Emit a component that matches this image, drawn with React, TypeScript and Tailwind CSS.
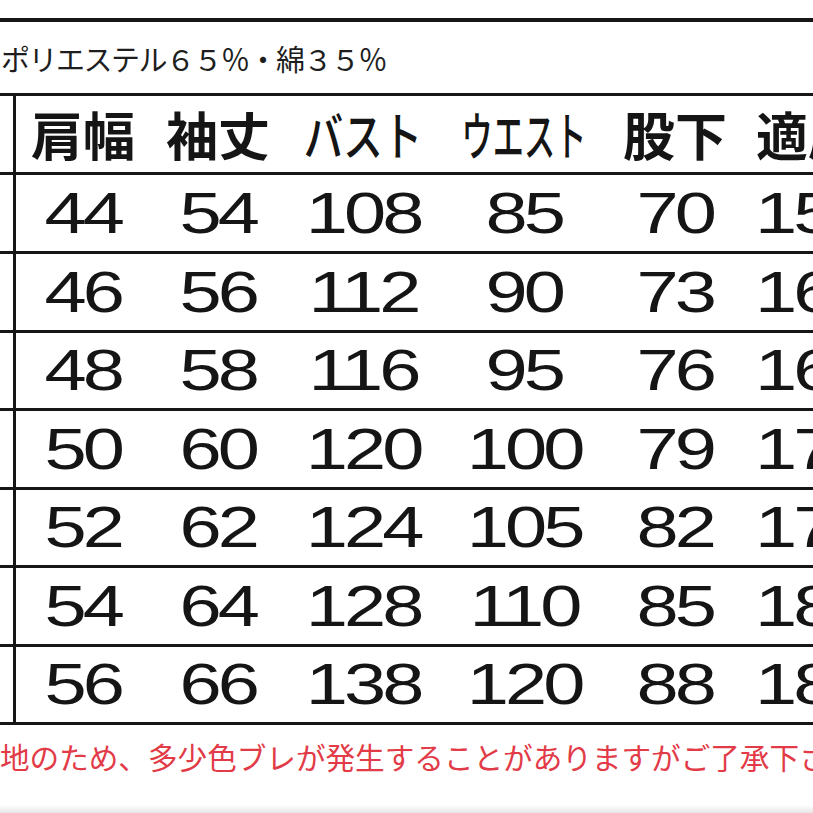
import React from "react";

const rows: string[][] = [
  ["44", "54", "108", "85", "70", "157"],
  ["46", "56", "112", "90", "73", "162"],
  ["48", "58", "116", "95", "76", "167"],
  ["50", "60", "120", "100", "79", "172"],
  ["52", "62", "124", "105", "82", "177"],
  ["54", "64", "128", "110", "85", "182"],
  ["56", "66", "138", "120", "88", "187"],
];

const rowHeights = ["h-[79px]", "h-[79px]", "h-[78px]", "h-[79px]", "h-[78px]", "h-[79px]", "h-[78px]"];

const colW = ["w-[134px]", "w-[136px]", "w-[154px]", "w-[168px]", "w-[134px]"];

function Num({ v }: { v: string }) {
  return (
    <span className="inline-block scale-x-[1.33] tracking-[-3px] text-[57px] leading-none text-[#151515] [font-family:'Liberation_Sans',Arial,sans-serif]">
      {v}
    </span>
  );
}

export default function App() {
  const jp = "[font-family:'Noto_Sans_CJK_JP','Noto_Sans',sans-serif]";
  return (
    <div className="w-[813px] h-[813px] bg-white overflow-hidden flex flex-col">
      <div className="h-[18px] shrink-0" />
      <div className="h-[4px] bg-[#161616] shrink-0" />
      <div className={`h-[71px] shrink-0 flex items-center pl-[1px] pt-[2px] text-[29px] tracking-[-1.5px] leading-none text-[#1e1e1e] whitespace-nowrap ${jp}`}>
        ポリエステル６５％・綿３５％
      </div>
      <div className="border-t-[3px] border-[#161616] shrink-0">
        {/* header */}
        <div className="h-[79px] flex border-b-[3px] border-[#161616]">
          <div className="w-[13px] shrink-0" />
          <div className={`flex-1 flex items-center border-l-[3px] border-[#161616] text-[52px] font-bold leading-none text-[#151515] whitespace-nowrap ${jp}`}>
            <div className={`${colW[0]} shrink-0 flex justify-center`}>肩幅</div>
            <div className={`${colW[1]} shrink-0 flex justify-center`}>袖丈</div>
            <div className={`${colW[2]} shrink-0 flex justify-center`}>
              <span className="inline-block scale-x-[0.76] font-medium">バスト</span>
            </div>
            <div className={`${colW[3]} shrink-0 flex justify-center`}>
              <span className="inline-block scale-x-[0.6] font-medium">ウエスト</span>
            </div>
            <div className={`${colW[4]} shrink-0 flex justify-center`}>股下</div>
            <div className="flex-1 pl-[14px]">適応身長</div>
          </div>
        </div>
        {rows.map((r, i) => (
          <div key={i} className={`${rowHeights[i]} flex border-b-[3px] border-[#161616]`}>
            <div className="w-[13px] shrink-0" />
            <div className="flex-1 flex items-center border-l-[3px] border-[#161616] whitespace-nowrap">
              {r.slice(0, 5).map((v, j) => (
                <div key={j} className={`${colW[j]} shrink-0 flex justify-center`}>
                  <Num v={v} />
                </div>
              ))}
              <div className="flex-1 pl-[13px]">
                <span className="inline-block origin-left scale-x-[1.33] tracking-[-3px] text-[57px] leading-none text-[#151515] [font-family:'Liberation_Sans',Arial,sans-serif]">
                  {r[5]}
                </span>
              </div>
            </div>
          </div>
        ))}
      </div>
      <div className={`h-[64px] shrink-0 flex items-center text-[29.6px] leading-none text-[#e23b47] whitespace-nowrap ${jp}`}>
        地のため、多少色ブレが発生することがありますがご了承下さい。
      </div>
      <div className="flex-1 flex flex-col justify-end">
        <div className="h-[8px] bg-linear-to-b from-white to-[#e6e6e6]" />
      </div>
    </div>
  );
}
